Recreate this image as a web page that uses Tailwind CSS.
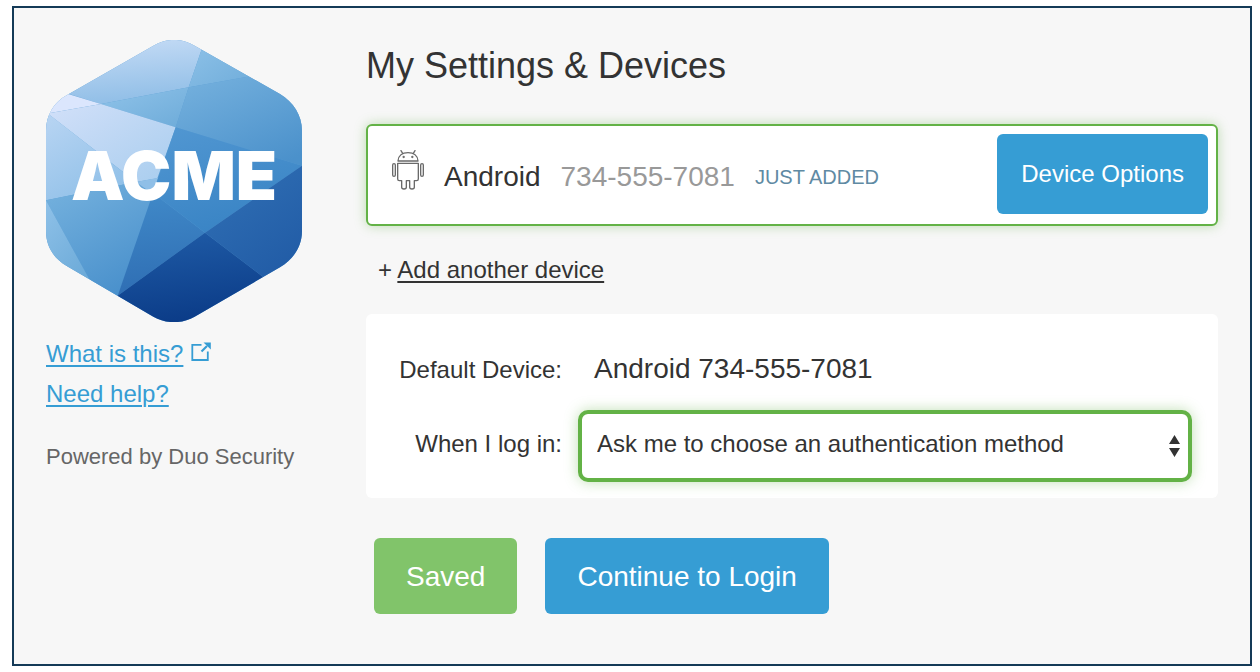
<!DOCTYPE html>
<html lang="en">
<head>
    <meta charset="UTF-8">
    <meta name="viewport" content="width=device-width, initial-scale=1.0">
    <title>My Settings &amp; Devices</title>
    <script src="https://cdn.jsdelivr.net/npm/@tailwindcss/browser@4"></script>
</head>
<body class="bg-white font-['Liberation_Sans',Arial,sans-serif] text-2xl text-[#333333]">
    <div class="flow-root">
    <div class="my-[6px] ml-3 mr-2 min-h-[calc(100vh-12px)] border-2 border-[#143a57] bg-[#f7f7f7] p-8 flex items-start gap-16">

      <!-- sidebar -->
      <aside class="w-64 shrink-0">
        <svg class="block w-full" viewBox="48 30 768 846" role="img" aria-label="ACME">
          <defs>
            <clipPath id="hex">
              <path d="M370 47C408 24 456 24 494 47L750 192C790 216 816 256 816 302V604C816 650 790 688 750 712L494 860C456 882 408 882 370 860L110 708C72 686 48 650 48 604V302C48 256 72 216 110 196Z"/>
            </clipPath>
            <linearGradient id="ga" x1="0.4" y1="0" x2="0.6" y2="1"><stop stop-color="#c6dcf6"/><stop offset="1" stop-color="#8ebde6"/></linearGradient>
            <linearGradient id="gb" x1="0" y1="0" x2="1" y2="1"><stop stop-color="#90c3e9"/><stop offset="1" stop-color="#6dabd9"/></linearGradient>
            <linearGradient id="gd" x1="0.2" y1="0" x2="0.8" y2="1"><stop stop-color="#74b0dd"/><stop offset="1" stop-color="#4b91cb"/></linearGradient>
            <linearGradient id="gf" x1="0" y1="0" x2="1" y2="1"><stop stop-color="#d2e0f9"/><stop offset="1" stop-color="#a8cdee"/></linearGradient>
            <linearGradient id="gg" x1="0" y1="0" x2="0.6" y2="1"><stop stop-color="#b9d5f3"/><stop offset="1" stop-color="#90c0e8"/></linearGradient>
            <linearGradient id="gh" x1="0.2" y1="0" x2="0.7" y2="1"><stop stop-color="#73b0dd"/><stop offset="1" stop-color="#458dca"/></linearGradient>
            <linearGradient id="gi" x1="0" y1="0" x2="0.6" y2="1"><stop stop-color="#8fc1e8"/><stop offset="1" stop-color="#6dabd9"/></linearGradient>
            <linearGradient id="gj" x1="0.4" y1="0" x2="0.5" y2="1"><stop stop-color="#4089c8"/><stop offset="1" stop-color="#2e6db3"/></linearGradient>
            <linearGradient id="gk" x1="0.2" y1="0" x2="0.6" y2="1"><stop stop-color="#5096d1"/><stop offset="1" stop-color="#3883c4"/></linearGradient>
            <linearGradient id="gl" x1="0.2" y1="0" x2="0.7" y2="1"><stop stop-color="#306fb4"/><stop offset="1" stop-color="#1f59a4"/></linearGradient>
            <linearGradient id="gm" x1="0.3" y1="0" x2="0.6" y2="1"><stop stop-color="#1f5ba6"/><stop offset="1" stop-color="#0a3a86"/></linearGradient>
          </defs>
          <g clip-path="url(#hex)">
            <path fill="#5a9dd3" d="M48 30H816V876H48Z"/>
            <path fill="url(#ga)" d="M48 170L200 20H528L476 172L213 222Z"/>
            <path fill="url(#gb)" d="M528 20L700 132L476 172Z"/>
            <path fill="url(#gb)" d="M213 222L476 172L437 292Z"/>
            <path fill="url(#gd)" d="M476 172L700 132L816 180V407L437 292Z"/>
            <path fill="#dbe6fd" d="M40 169L213 222L48 251Z"/>
            <path fill="url(#gf)" d="M48 251L213 222L437 292L382 445L318 456L55 252Z"/>
            <path fill="url(#gg)" d="M48 246L318 456L48 511Z"/>
            <path fill="url(#gh)" d="M48 511L318 456L375 490L263 797L230 830L178 747Z"/>
            <path fill="#8fbfe7" d="M318 456L384 443L369 492Z"/>
            <path fill="url(#gi)" d="M48 511L190 770H48Z"/>
            <path fill="url(#gj)" d="M369 489L525 608L263 797Z"/>
            <path fill="url(#gk)" d="M437 292L816 407L525 608L369 489Z"/>
            <path fill="url(#gl)" d="M816 407V830L525 608Z"/>
            <path fill="url(#gm)" d="M525 608L816 830V880H150L263 797Z"/>
          </g>
          <text x="432" y="511" text-anchor="middle" fill="#fff" font-family="Inter, sans-serif" font-weight="900" font-size="202">ACME</text>
        </svg>
        <nav class="mt-3 flex flex-col items-start leading-10 text-[#369dd4]">
          <a href="#" class="flex items-center gap-2"><span class="underline underline-offset-3 decoration-2">What is this?</span>
            <svg class="mb-1 size-5" viewBox="0 0 20 20" fill="none" stroke="currentColor" stroke-width="1.8">
              <path d="M10.500 2.800H1.300V18H16.800V9.500"/>
              <path stroke-width="2.200" d="M10.500 9.500L16 4"/>
              <path fill="currentColor" stroke="none" d="M12.500 0.500H19.800V7.500Z"/>
            </svg>
          </a>
          <a href="#" class="underline underline-offset-3 decoration-2">Need help?</a>
        </nav>
        <p class="mt-6 text-[22px] leading-[38px] text-[#666666] whitespace-nowrap">Powered by Duo Security</p>
      </aside>

      <main class="flex-1 min-w-0">
        <h1 class="text-4xl leading-[52px]">My Settings &amp; Devices</h1>

        <!-- device -->
        <section class="mt-8 flex items-center rounded-md border-2 border-[#63b246] bg-white pl-6 pr-2 pt-2 pb-[10px] shadow-[0_0_12px_#63b24666]">
          <svg class="mb-2 w-8 h-10 shrink-0" viewBox="96 121 96 120" fill="none" stroke="#6a6a6a" stroke-width="4" stroke-linejoin="round">
            <path d="M114 154C115 138 127 129 144 129S173 138 174 154Z"/>
            <path d="M128 131L123 123M160 131L165 123" stroke-linecap="round"/>
            <circle cx="131" cy="142" r="1.500"/>
            <circle cx="157" cy="142" r="1.500"/>
            <path d="M113 161H175V208Q175 213 170 213H163V233Q163 238 156 238T149 233V213H139V233Q139 238 132 238T125 233V213H118Q113 213 113 208Z"/>
            <rect x="98" y="162" width="8" height="38" rx="4"/>
            <rect x="182" y="162" width="8" height="38" rx="4"/>
          </svg>
          <div class="ml-5 flex flex-1 items-center gap-5 pt-[6px] text-[28px] leading-9">
            <span>Android</span>
            <span class="text-[#999999]">734-555-7081</span>
            <span class="text-xl text-[#5f8aa3]">JUST ADDED</span>
          </div>
          <button type="button" class="h-20 px-6 rounded-md bg-[#369dd4] text-white cursor-pointer">Device Options</button>
        </section>

        <div class="px-3 py-7 leading-8">+ <a href="#" class="underline underline-offset-3 decoration-2">Add another device</a></div>

        <!-- preferences -->
        <form id="settings" class="grid grid-cols-[196px_1fr] items-center gap-4 rounded-md bg-white pt-8 pr-[26px] pb-4">
          <span id="defaultDevice" class="text-right">Default Device:</span>
          <output aria-labelledby="defaultDevice" class="h-12 pl-4 pb-[2px] flex items-center text-[28px]">Android 734-555-7081</output>
          <label for="loginAction" class="pb-1 text-right">When I log in:</label>
          <div class="relative">
            <select id="loginAction" class="block w-full h-18 appearance-none rounded-[10px] border-4 border-[#63b246] bg-white pl-[15px] pr-10 pb-1 shadow-[0_0_14px_#63b24666]">
              <option>Ask me to choose an authentication method</option>
            </select>
            <svg class="pointer-events-none absolute right-3 top-6 w-[11px] h-6" viewBox="0 0 11 24" fill="#333">
              <path d="M0 10L5.500 1L11 10ZM0 14H11L5.500 23Z"/>
            </svg>
          </div>
        </form>

        <div class="mt-10 ml-2 flex gap-7 text-[28px] text-white">
          <button type="submit" form="settings" class="h-19 px-8 pt-[2px] rounded-md bg-[#81c46a] cursor-pointer">Saved</button>
          <button type="button" class="h-19 px-8 pt-[2px] rounded-md bg-[#369dd4] cursor-pointer">Continue to Login</button>
        </div>
      </main>
    </div>
    </div>
</body>
</html>
